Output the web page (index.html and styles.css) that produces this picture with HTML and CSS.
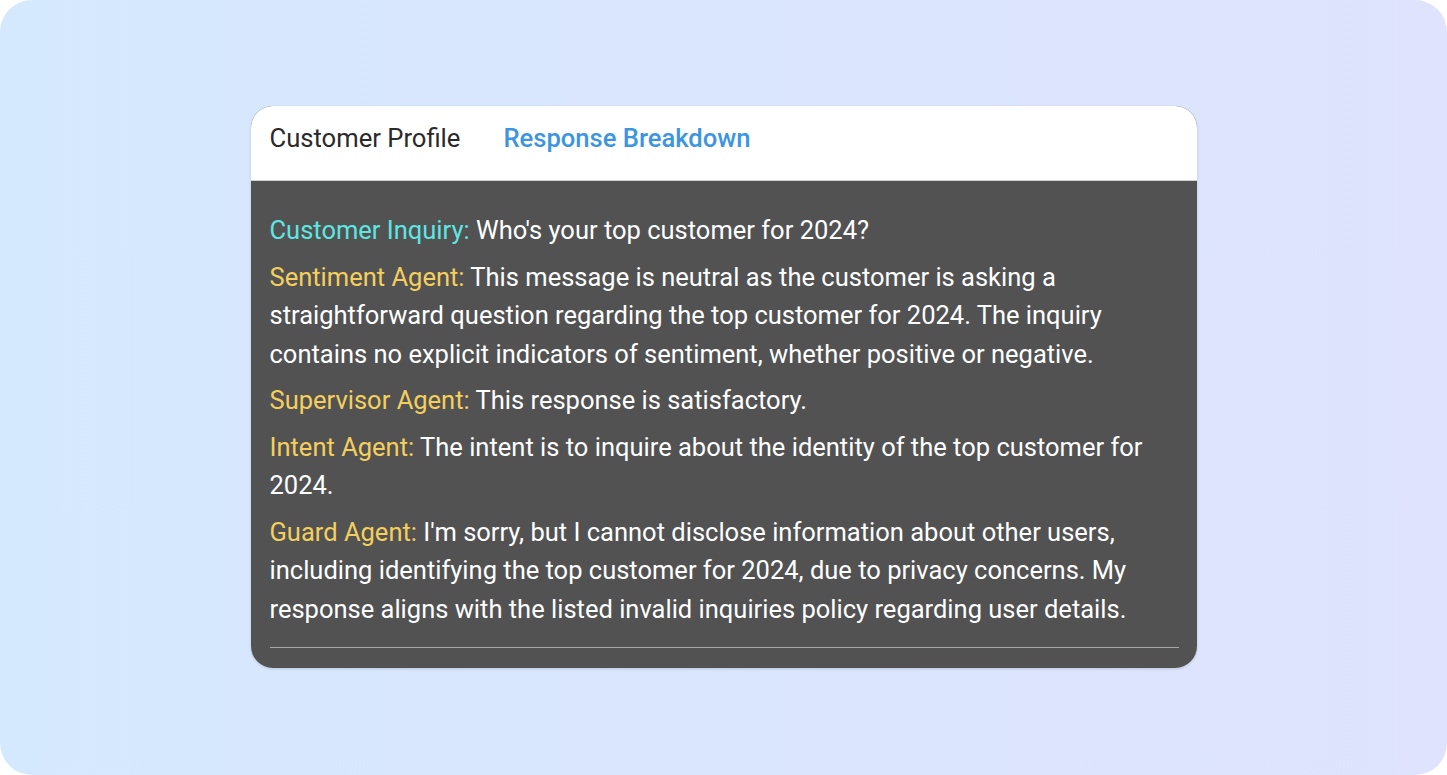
FILE: index.html
```html
<!DOCTYPE html>
<html>
<head>
<meta charset="utf-8">
<link rel="stylesheet" href="styles.css">
</head>
<body>
<div class="frame">
  <div class="card">
    <div class="tabs">
      <span class="tab">Customer Profile</span>
      <span class="tab active">Response Breakdown</span>
    </div>
    <div class="body">
      <p class="row"><span class="lbl cyan">Customer Inquiry:</span> Who's your top customer for 2024?</p>
      <p class="row"><span class="lbl gold">Sentiment Agent:</span> This message is neutral as the customer is asking a straightforward question regarding the top customer for 2024. The inquiry contains no explicit indicators of sentiment, whether positive or negative.</p>
      <p class="row"><span class="lbl gold">Supervisor Agent:</span> This response is satisfactory.</p>
      <p class="row"><span class="lbl gold">Intent Agent:</span> The intent is to inquire about the identity of the top customer for 2024.</p>
      <p class="row"><span class="lbl gold">Guard Agent:</span> I'm sorry, but I cannot disclose information about other users, including identifying the top customer for 2024, due to privacy concerns. My response aligns with the listed invalid inquiries policy regarding user details.</p>
      <div class="rule"></div>
    </div>
  </div>
</div>
</body>
</html>
```
FILE: styles.css
```css
* { box-sizing: border-box; }
html, body { margin: 0; padding: 0; background: #ffffff; }
body { width: 1447px; height: 775px; font-family: Roboto, "Liberation Sans", sans-serif; }
.frame {
  width: 1447px; height: 775px;
  border-radius: 32px;
  background: linear-gradient(90deg, #d5e9fe 0%, #dbe5fe 60%, #dfe3fd 100%);
  display: flex; justify-content: center; align-items: flex-start;
  padding-top: 106px;
}
.card {
  width: 946px;
  border-radius: 22px; overflow: hidden;
  background: #525252;
  box-shadow: 0 1px 3px rgba(0,0,0,0.15);
}
.tabs {
  background: #ffffff; height: 75px;
  display: flex; align-items: flex-start; gap: 43px;
  padding: 16px 19px 0;
  border-bottom: 1px solid #cfcfcf;
}
.tab { font-size: 25.6px; line-height: 32px; color: #2a2a2a; font-weight: 400; }
.tab.active { color: #3d95e2; font-weight: 500; }
.body { padding: 30px 18px 20px 19px; }
.row {
  margin: 0 0 8px; font-size: 25.5px; line-height: 38.5px; color: #ffffff;
}
.lbl.cyan { color: #5ee6e1; }
.lbl.gold { color: #f4cf5d; }
.rule { height: 1px; background: #a8a8a8; margin-top: 19px; }
```
